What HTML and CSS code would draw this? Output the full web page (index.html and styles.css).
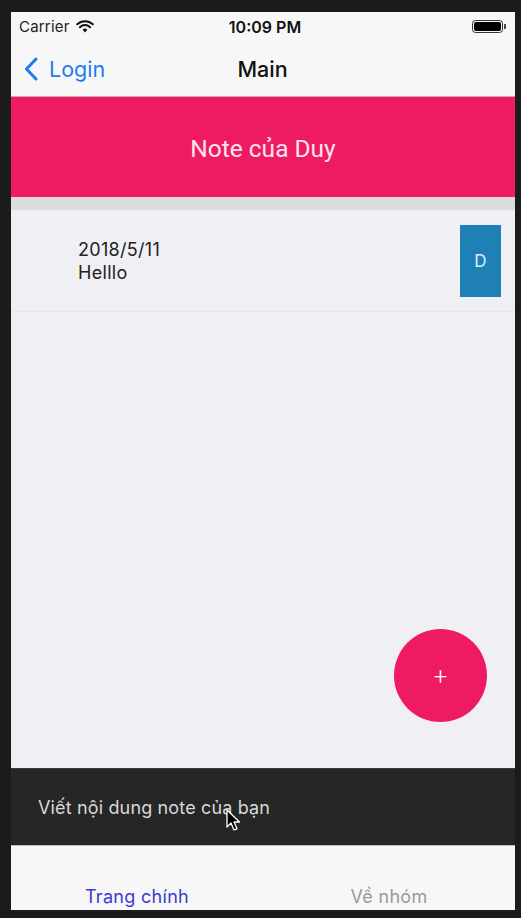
FILE: index.html
```html
<!DOCTYPE html>
<html>
<head>
<meta charset="utf-8">
<link rel="stylesheet" href="styles.css">
</head>
<body>
<div class="frame">
  <div class="screen">
    <div class="statusbar">
      <div class="sb-left">
        <span class="carrier">Carrier</span>
        <svg class="wifi" width="18" height="13" viewBox="0 0 18 13">
          <path d="M9 12.5 L6.6 9.8 A3.4 3.4 0 0 1 11.4 9.8 Z" fill="#111"/>
          <path d="M3.9 7.2 A7.3 7.3 0 0 1 14.1 7.2" stroke="#111" stroke-width="2" fill="none" stroke-linecap="round"/>
          <path d="M1.2 4.3 A11.3 11.3 0 0 1 16.8 4.3" stroke="#111" stroke-width="2" fill="none" stroke-linecap="round"/>
        </svg>
      </div>
      <div class="time">10:09 PM</div>
      <div class="sb-right">
        <div class="battery"><div class="battery-fill"></div></div>
        <div class="battery-cap"></div>
      </div>
    </div>
    <div class="navbar">
      <div class="back">
        <svg width="14" height="24" viewBox="0 0 14 24"><path d="M12 2 L2.5 12 L12 22" stroke="#1a7df1" stroke-width="3" fill="none" stroke-linecap="round" stroke-linejoin="round"/></svg>
        <span>Login</span>
      </div>
      <div class="nav-title">Main</div>
      <div class="nav-spacer"></div>
    </div>
    <div class="header">Note của Duy</div>
    <div class="gap-strip"></div>
    <div class="content">
      <div class="note-row">
        <div class="note-text">
          <div>2018/5/11</div>
          <div>Helllo</div>
        </div>
        <div class="delete-btn">D</div>
      </div>
      <div class="fab">+</div>
    </div>
    <div class="inputbar">
      <span class="placeholder">Viết nội dung note của bạn</span>
      <svg class="cursor" width="16" height="24" viewBox="0 0 16 24">
        <path d="M1 1 L1 18 L5 14 L8 21 L11 19.8 L8 13 L13.5 13 Z" fill="#000" stroke="#fff" stroke-width="1.3" stroke-linejoin="round"/>
      </svg>
    </div>
    <div class="tabbar">
      <div class="tab active">Trang chính</div>
      <div class="tab">Về nhóm</div>
    </div>
  </div>
</div>
</body>
</html>
```
FILE: styles.css
```css
* { box-sizing: border-box; }
html, body { margin: 0; padding: 0; }
body {
  background: #1b1b1b;
  width: 521px;
  height: 918px;
  overflow: hidden;
  font-family: "Inter", "Roboto", "Liberation Sans", sans-serif;
}
.frame {
  padding: 12px 6px 8px 11px;
}
.screen {
  width: 504px;
  height: 898px;
  display: flex;
  flex-direction: column;
  background: #f7f7f7;
}
.statusbar {
  height: 28px;
  display: flex;
  align-items: center;
  justify-content: space-between;
  padding: 1px 9px 0 8px;
  color: #111;
  position: relative;
}
.sb-left { display: flex; align-items: center; gap: 6px; width: 120px; }
.carrier { font-size: 15px; color: #222; letter-spacing: 0.2px; }
.wifi { margin-top: -1px; }
.time {
  font-size: 16px;
  font-weight: 600;
  color: #111;
  position: absolute;
  left: 0; right: 0;
  text-align: center;
  top: 5px;
  padding-left: 4px;
}
.sb-right { display: flex; align-items: center; width: 120px; justify-content: flex-end; }
.battery {
  width: 31px;
  height: 13px;
  border: 1px solid #333;
  border-radius: 3.5px;
  padding: 1px;
}
.battery-fill { width: 100%; height: 100%; background: #000; border-radius: 2px; }
.battery-cap { width: 2px; height: 5px; background: #444; border-radius: 0 1px 1px 0; margin-left: 1px; }
.navbar {
  height: 57px;
  display: flex;
  align-items: center;
  justify-content: space-between;
  padding: 0 10px 0 13px;
  border-bottom: 1px solid #d8a0b0;
}
.back {
  display: flex;
  align-items: center;
  gap: 11px;
  width: 110px;
  color: #1a7df1;
  font-size: 21.5px;
  margin-top: 2px;
}
.nav-title {
  font-size: 21.5px;
  font-weight: 500;
  color: #111;
  margin-top: 2px;
  margin-right: 4px;
}
.nav-spacer { width: 110px; }
.header {
  height: 100px;
  background: #ee1b62;
  color: #fde4ec;
  font-family: "Roboto", "Liberation Sans", sans-serif;
  font-size: 24.5px;
  display: flex;
  align-items: center;
  justify-content: center;
  padding-top: 3px;
}
.gap-strip { height: 13px; background: #dcdcdc; }
.content {
  flex: 1;
  background: #efeff4;
  position: relative;
}
.note-row {
  height: 102px;
  display: flex;
  align-items: center;
  justify-content: space-between;
  padding: 0 14px 0 67px;
  border-bottom: 1px solid #e7e7eb;
}
.note-text {
  font-size: 18px;
  line-height: 23px;
  color: #222;
  letter-spacing: 0.3px;
  padding-top: 1px;
}
.delete-btn {
  width: 41px;
  height: 72px;
  background: #1f80b6;
  color: #dbeef8;
  font-size: 17px;
  display: flex;
  align-items: center;
  justify-content: center;
}
.fab {
  position: absolute;
  right: 28px;
  bottom: 46px;
  width: 93px;
  height: 93px;
  border-radius: 50%;
  background: #ee1b62;
  color: #fff;
  font-family: "Roboto", sans-serif;
  font-size: 24px;
  font-weight: 300;
  display: flex;
  align-items: center;
  justify-content: center;
  padding-top: 2px;
}
.inputbar {
  height: 77px;
  background: #262626;
  display: flex;
  align-items: center;
  padding: 0 0 0 27px;
  position: relative;
  border-top: 1px solid #3a3a3a;
}
.placeholder {
  color: #d8d8d8;
  font-size: 18px;
  letter-spacing: 0.15px;
}
.cursor {
  position: absolute;
  left: 215px;
  top: 40px;
}
.tabbar {
  height: 65px;
  background: #f7f7f7;
  display: flex;
  align-items: flex-end;
  padding-bottom: 2px;
  border-top: 1px solid #bdbdbd;
}
.tab {
  flex: 1;
  text-align: center;
  font-size: 18px;
  letter-spacing: 0.3px;
  color: #9a9a9a;
  line-height: 22px;
}
.tab.active { color: #3b3bd0; }
```
